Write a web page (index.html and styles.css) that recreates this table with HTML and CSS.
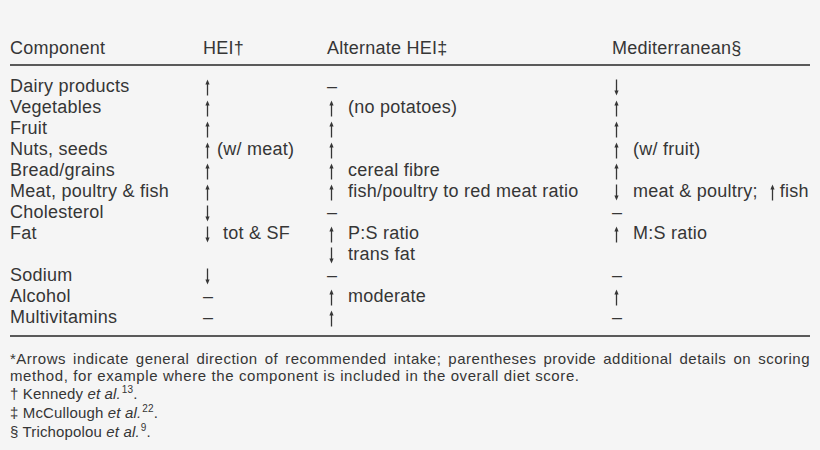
FILE: index.html
```html
<!DOCTYPE html>
<html>
<head>
<meta charset="utf-8">
<link rel="stylesheet" href="styles.css">
</head>
<body>
<div class="page">
  <div class="tbl">
    <div class="row head">
      <div>Component</div><div>HEI†</div><div>Alternate HEI‡</div><div>Mediterranean§</div>
    </div>
    <div class="body">
      <div class="row"><div>Dairy products</div><div><svg class="ar" viewBox="0 0 9 17" aria-label="↑"><path d="M4.5 0.6L2.4 5.6H6.6Z"/><line x1="4.5" y1="4" x2="4.5" y2="16.5"/></svg></div><div>–</div><div><svg class="ar dn" viewBox="0 0 9 17" aria-label="↓"><path d="M4.5 0.6L2.4 5.6H6.6Z"/><line x1="4.5" y1="4" x2="4.5" y2="16.5"/></svg></div></div>
      <div class="row"><div>Vegetables</div><div><svg class="ar" viewBox="0 0 9 17"><path d="M4.5 0.6L2.4 5.6H6.6Z"/><line x1="4.5" y1="4" x2="4.5" y2="16.5"/></svg></div><div><svg class="ar" viewBox="0 0 9 17"><path d="M4.5 0.6L2.4 5.6H6.6Z"/><line x1="4.5" y1="4" x2="4.5" y2="16.5"/></svg><span class="na">(no potatoes)</span></div><div><svg class="ar" viewBox="0 0 9 17"><path d="M4.5 0.6L2.4 5.6H6.6Z"/><line x1="4.5" y1="4" x2="4.5" y2="16.5"/></svg></div></div>
      <div class="row"><div>Fruit</div><div><svg class="ar" viewBox="0 0 9 17"><path d="M4.5 0.6L2.4 5.6H6.6Z"/><line x1="4.5" y1="4" x2="4.5" y2="16.5"/></svg></div><div><svg class="ar" viewBox="0 0 9 17"><path d="M4.5 0.6L2.4 5.6H6.6Z"/><line x1="4.5" y1="4" x2="4.5" y2="16.5"/></svg></div><div><svg class="ar" viewBox="0 0 9 17"><path d="M4.5 0.6L2.4 5.6H6.6Z"/><line x1="4.5" y1="4" x2="4.5" y2="16.5"/></svg></div></div>
      <div class="row"><div>Nuts, seeds</div><div><svg class="ar" viewBox="0 0 9 17"><path d="M4.5 0.6L2.4 5.6H6.6Z"/><line x1="4.5" y1="4" x2="4.5" y2="16.5"/></svg><span class="nh">(w/ meat)</span></div><div><svg class="ar" viewBox="0 0 9 17"><path d="M4.5 0.6L2.4 5.6H6.6Z"/><line x1="4.5" y1="4" x2="4.5" y2="16.5"/></svg></div><div><svg class="ar" viewBox="0 0 9 17"><path d="M4.5 0.6L2.4 5.6H6.6Z"/><line x1="4.5" y1="4" x2="4.5" y2="16.5"/></svg><span class="nm">(w/ fruit)</span></div></div>
      <div class="row"><div>Bread/grains</div><div><svg class="ar" viewBox="0 0 9 17"><path d="M4.5 0.6L2.4 5.6H6.6Z"/><line x1="4.5" y1="4" x2="4.5" y2="16.5"/></svg></div><div><svg class="ar" viewBox="0 0 9 17"><path d="M4.5 0.6L2.4 5.6H6.6Z"/><line x1="4.5" y1="4" x2="4.5" y2="16.5"/></svg><span class="na">cereal fibre</span></div><div><svg class="ar" viewBox="0 0 9 17"><path d="M4.5 0.6L2.4 5.6H6.6Z"/><line x1="4.5" y1="4" x2="4.5" y2="16.5"/></svg></div></div>
      <div class="row"><div>Meat, poultry &amp; fish</div><div><svg class="ar" viewBox="0 0 9 17"><path d="M4.5 0.6L2.4 5.6H6.6Z"/><line x1="4.5" y1="4" x2="4.5" y2="16.5"/></svg></div><div><svg class="ar" viewBox="0 0 9 17"><path d="M4.5 0.6L2.4 5.6H6.6Z"/><line x1="4.5" y1="4" x2="4.5" y2="16.5"/></svg><span class="na">fish/poultry to red meat ratio</span></div><div><svg class="ar dn" viewBox="0 0 9 17"><path d="M4.5 0.6L2.4 5.6H6.6Z"/><line x1="4.5" y1="4" x2="4.5" y2="16.5"/></svg><span class="nm">meat &amp; poultry;</span><svg class="ar sp" viewBox="0 0 9 17"><path d="M4.5 0.6L2.4 5.6H6.6Z"/><line x1="4.5" y1="4" x2="4.5" y2="16.5"/></svg><span class="ns">fish</span></div></div>
      <div class="row"><div>Cholesterol</div><div><svg class="ar dn" viewBox="0 0 9 17"><path d="M4.5 0.6L2.4 5.6H6.6Z"/><line x1="4.5" y1="4" x2="4.5" y2="16.5"/></svg></div><div>–</div><div>–</div></div>
      <div class="row"><div>Fat</div><div><svg class="ar dn" viewBox="0 0 9 17"><path d="M4.5 0.6L2.4 5.6H6.6Z"/><line x1="4.5" y1="4" x2="4.5" y2="16.5"/></svg><span class="nh2">tot &amp; SF</span></div><div><div><svg class="ar" viewBox="0 0 9 17"><path d="M4.5 0.6L2.4 5.6H6.6Z"/><line x1="4.5" y1="4" x2="4.5" y2="16.5"/></svg><span class="na">P:S ratio</span></div><div><svg class="ar dn" viewBox="0 0 9 17"><path d="M4.5 0.6L2.4 5.6H6.6Z"/><line x1="4.5" y1="4" x2="4.5" y2="16.5"/></svg><span class="na">trans fat</span></div></div><div><svg class="ar" viewBox="0 0 9 17"><path d="M4.5 0.6L2.4 5.6H6.6Z"/><line x1="4.5" y1="4" x2="4.5" y2="16.5"/></svg><span class="nm">M:S ratio</span></div></div>
      <div class="row"><div>Sodium</div><div><svg class="ar dn" viewBox="0 0 9 17"><path d="M4.5 0.6L2.4 5.6H6.6Z"/><line x1="4.5" y1="4" x2="4.5" y2="16.5"/></svg></div><div>–</div><div>–</div></div>
      <div class="row"><div>Alcohol</div><div>–</div><div><svg class="ar" viewBox="0 0 9 17"><path d="M4.5 0.6L2.4 5.6H6.6Z"/><line x1="4.5" y1="4" x2="4.5" y2="16.5"/></svg><span class="na">moderate</span></div><div><svg class="ar" viewBox="0 0 9 17"><path d="M4.5 0.6L2.4 5.6H6.6Z"/><line x1="4.5" y1="4" x2="4.5" y2="16.5"/></svg></div></div>
      <div class="row"><div>Multivitamins</div><div>–</div><div><svg class="ar" viewBox="0 0 9 17"><path d="M4.5 0.6L2.4 5.6H6.6Z"/><line x1="4.5" y1="4" x2="4.5" y2="16.5"/></svg></div><div>–</div></div>
    </div>
  </div>
  <div class="notes">
    <p class="lead"><span class="l1">*Arrows indicate general direction of recommended intake; parentheses provide additional details on scoring</span> <span class="l2">method, for example where the component is included in the overall diet score.</span></p>
    <p class="ref">† Kennedy <i>et al.</i><sup>13</sup>.</p>
    <p class="ref">‡ McCullough <i>et al.</i><sup>22</sup>.</p>
    <p class="ref">§ Trichopolou <i>et al.</i><sup>9</sup>.</p>
  </div>
</div>
</body>
</html>
```

FILE: styles.css
```css
html, body {
  margin: 0;
  padding: 0;
  background: #f5f5f5;
}
body {
  width: 820px;
  height: 450px;
  overflow: hidden;
  font-family: "Liberation Sans", Arial, sans-serif;
  color: #363636;
}
.page {
  padding: 38px 10px 0 10px;
}
.tbl {
  font-size: 18px;
  line-height: 21px;
  letter-spacing: 0.25px;
}
.row {
  display: grid;
  grid-template-columns: 193px 124px 285px 198px;
}
.head {
  padding-bottom: 5px;
  border-bottom: 2px solid #5a5a5a;
}
.body {
  padding-top: 10px;
  padding-bottom: 7px;
  border-bottom: 2px solid #5a5a5a;
}
.ar {
  display: inline-block;
  width: 9px;
  height: 17px;
  vertical-align: -4px;
  fill: #363636;
  stroke: #363636;
  stroke-width: 1.3;
}
.ar path {
  stroke: none;
}
.ar.dn {
  transform: rotate(180deg);
}
.na { margin-left: 12px; }
.nh { margin-left: 5px; }
.nh2 { margin-left: 11px; }
.nm { margin-left: 12px; }
.sp { margin-left: 10px; }
.ns { margin-left: 3px; }
.notes {
  padding-top: 13px;
  font-size: 15px;
  letter-spacing: 0.15px;
}
.notes p {
  margin: 0;
}
.lead {
  line-height: 17px;
}
.l1 {
  display: block;
  white-space: nowrap;
  letter-spacing: 0.5px;
  text-align: justify;
  text-align-last: justify;
}
.l2 {
  display: block;
  letter-spacing: 0.6px;
}
.ref {
  line-height: 19px;
}
.notes sup {
  font-size: 10px;
  line-height: 0;
  vertical-align: 6px;
  margin-left: 1px;
}
```
